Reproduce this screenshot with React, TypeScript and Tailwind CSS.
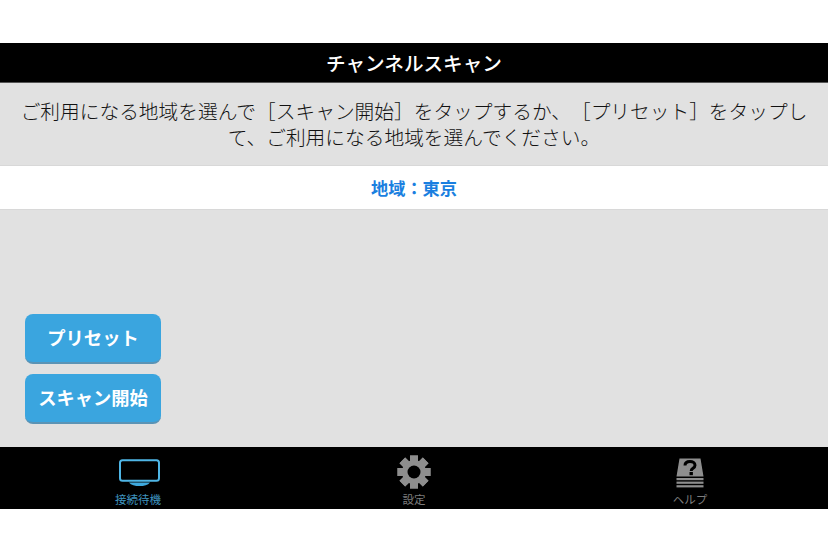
const font = { fontFamily: '"Noto Sans CJK JP", "Liberation Sans", sans-serif' };

function TvIcon() {
  return (
    <svg width="42" height="30" viewBox="0 0 42 30" fill="none" className="ml-[3px]">
      <rect x="1" y="1.2" width="39" height="20.6" rx="2.5" stroke="#4fb6e6" strokeWidth="2" />
      <path d="M10 23.5h21c-2 2.6-6 3.6-10.5 3.6s-8.500-1-10.500-3.600z" fill="#3ea9de" />
    </svg>
  );
}

function GearIcon() {
  const teeth = [0, 45, 90, 135, 180, 225, 270, 315];
  return (
    <svg width="34" height="34" viewBox="0 0 34 34">
      {teeth.map((a) => (
        <rect key={a} x="13" y="0.5" width="8" height="33" fill="#8e8e8e" transform={`rotate(${a} 17 17)`} />
      ))}
      <circle cx="17" cy="17" r="12" fill="#8e8e8e" />
      <circle cx="17" cy="17" r="6.5" fill="#000" />
    </svg>
  );
}

function HelpIcon() {
  return (
    <svg width="30" height="30" viewBox="0 0 30 30" className="mb-[1px]">
      <path d="M4.500 0.500h21l3 18H1.500z" fill="#8e8e8e" />
      <rect x="1.500" y="20" width="27" height="2.200" fill="#8e8e8e" />
      <rect x="1.500" y="23.600" width="27" height="2.200" fill="#8e8e8e" />
      <rect x="1.500" y="27.200" width="27" height="2.200" fill="#8e8e8e" />
      <path d="M10 7.500c0-2.600 2.200-4 5-4s5 1.400 5 3.700c0 3.200-3.800 3-3.800 5.800" fill="none" stroke="#000" strokeWidth="3" />
      <rect x="14.500" y="14" width="3.400" height="3.200" fill="#000" />
    </svg>
  );
}

function Tab({ icon, label, active }: { icon: React.ReactNode; label: string; active?: boolean }) {
  return (
    <div className="flex-1 flex flex-col items-center">
      <div className="h-[42px] flex items-end justify-center">{icon}</div>
      <p className={`text-[11.500px] leading-[14px] mt-[3px] ${active ? "text-[#3f93bf]" : "text-[#7d7d7d]"}`}>{label}</p>
    </div>
  );
}

export default function App() {
  return (
    <div className="w-[828px] h-[552px] bg-white flex flex-col pt-[43px] pb-[43px] [text-spacing-trim:space-all]" style={font}>
      {/* Title */}
      <div className="h-[40px] shrink-0 bg-black border-b border-[#555] flex items-center justify-center text-white text-[19.600px] font-medium">
        チャンネルスキャン
      </div>

      {/* Description */}
      <div className="h-[83px] shrink-0 bg-[#e1e1e1] border-b border-[#d8d8d8] px-[18px] pt-[15px] text-center text-[19.720px] leading-[26px] text-[#111] font-light">
        ご利用になる地域を選んで［スキャン開始］をタップするか、［プリセット］をタップして、ご利用になる地域を選んでください。
      </div>

      {/* Region */}
      <div className="h-[44px] shrink-0 bg-white border-b border-[#d8d8d8] flex items-center justify-center text-[#1a7fe0] text-[17.200px] font-bold">
        地域：東京
      </div>

      {/* Buttons */}
      <div className="flex-1 bg-[#e1e1e1] flex flex-col justify-end gap-[10px] pl-[25px] pb-[23px]">
        <button className="w-[136px] h-[50px] rounded-[8px] bg-[#3aa5df] border-b-2 border-[#5a93b5] text-white text-[18.300px] font-bold">
          プリセット
        </button>
        <button className="w-[136px] h-[50px] rounded-[8px] bg-[#3aa5df] border-b-2 border-[#5a93b5] text-white text-[18.300px] font-bold">
          スキャン開始
        </button>
      </div>

      {/* Tab bar */}
      <div className="h-[62px] shrink-0 bg-black flex overflow-hidden">
        <Tab icon={<TvIcon />} label="接続待機" active />
        <Tab icon={<GearIcon />} label="設定" />
        <Tab icon={<HelpIcon />} label="ヘルプ" />
      </div>
    </div>
  );
}
